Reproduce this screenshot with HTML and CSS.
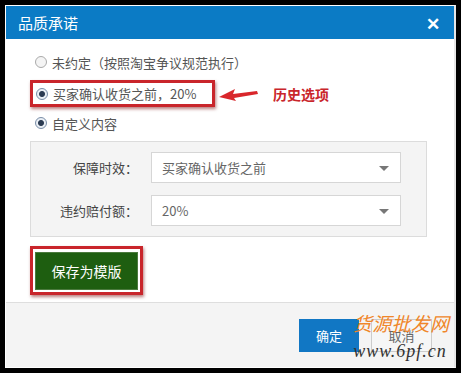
FILE: index.html
```html
<!DOCTYPE html>
<html>
<head>
	<meta charset="UTF-8">
	<title>品质承诺</title>
	<link rel="stylesheet" href="styles.css">
</head>
<body>
	<div class="dialog">
		<div class="dlg-head">
			<span class="dlg-title">品质承诺</span>
			<span class="dlg-close">&#x2715;</span>
		</div>
		<div class="dlg-body">
			<div class="opt opt-first">
				<span class="radio"></span>
				<span>未约定（按照淘宝争议规范执行）</span>
			</div>
			<div class="opt-line">
				<div class="mark">
					<div class="opt">
						<span class="radio on"></span>
						<span>买家确认收货之前，20%</span>
					</div>
				</div>
				<svg class="arrow" width="40" height="14" viewBox="0 0 40 14">
					<polygon points="0,9 16,1 14,6 38,3 39,6 15,10 17,13" fill="#d9262b"/>
				</svg>
				<span class="note">历史选项</span>
			</div>
			<div class="opt opt-last">
				<span class="radio on"></span>
				<span>自定义内容</span>
			</div>
			<div class="panel">
				<div class="row">
					<label>保障时效：</label>
					<div class="select">买家确认收货之前<i class="caret"></i></div>
				</div>
				<div class="row">
					<label>违约赔付额：</label>
					<div class="select">20%<i class="caret"></i></div>
				</div>
			</div>
			<div class="mark mark-btn">
				<div class="btn-save">保存为模版</div>
			</div>
		</div>
		<div class="dlg-foot">
			<div class="btn btn-ok">确定</div>
			<div class="btn btn-cancel">取消</div>
			<div class="stamp">
				<div class="stamp-cn">货 源 批 发 网</div>
				<div class="stamp-en">www.6pf.cn</div>
			</div>
		</div>
	</div>
</body>
</html>
```
FILE: styles.css
```css
body,div,span,label{
	margin: 0;
	padding: 0;
}
body{
	background: #000;
	padding: 5px 6px 4px 5px;
	font-family: "Noto Sans CJK SC", "Liberation Sans", sans-serif;
	font-size: 13px;
	color: #555;
}
.dialog{
	width: 448px;
	border: 1px solid #fff;
	border-right: 2px solid #e6e6e6;
	position: relative;
}
.dlg-head{
	height: 33px;
	background: #0b7bc5;
	display: flex;
	align-items: center;
	justify-content: space-between;
	padding: 0 14px 0 12px;
	color: #fff;
}
.dlg-title{
	font-size: 15px;
}
.dlg-close{
	font-size: 17px;
	font-weight: bold;
}
.dlg-body{
	background: #fff;
	height: 263px;
	padding-left: 24px;
	box-sizing: border-box;
	padding-top: 13px;
}
.opt{
	display: flex;
	align-items: center;
	height: 20px;
	gap: 5px;
	padding-left: 5px;
}
.radio{
	width: 10px;
	height: 10px;
	border-radius: 50%;
	border: 1px solid #aaa;
	background: #f4f4f4;
	display: block;
	box-sizing: content-box;
}
.radio.on{
	background: radial-gradient(circle, #2b3b52 0, #2b3b52 2.5px, #e9eef4 3.5px);
	border-color: #7a8ea8;
}
.opt-line{
	display: flex;
	align-items: center;
	margin-top: 8px;
}
.mark{
	border: 3px solid #c9252b;
	box-shadow: 1px 2px 3px rgba(120,0,0,.5);
	width: 185px;
	height: 27px;
	box-sizing: border-box;
	display: flex;
	align-items: center;
}
.mark .opt{
	padding-left: 3px;
}
.arrow{
	margin-left: 4px;
	margin-top: 2px;
}
.note{
	color: #c9252b;
	font-size: 14px;
	font-weight: bold;
	margin-left: 14px;
}
.opt-last{
	margin-top: 6px;
}
.panel{
	margin-top: 8px;
	width: 397px;
	height: 96px;
	box-sizing: border-box;
	background: #f4f4f4;
	border: 1px solid #dcdcdc;
	padding-top: 10px;
	display: flex;
	flex-direction: column;
	gap: 12px;
}
.row{
	display: flex;
	align-items: center;
}
.row label{
	width: 107px;
	text-align: right;
	color: #444;
}
.select{
	margin-left: 13px;
	width: 250px;
	height: 31px;
	box-sizing: border-box;
	background: #fff;
	border: 1px solid #d6d6d6;
	display: flex;
	align-items: center;
	padding-left: 10px;
	position: relative;
	color: #666;
}
.caret{
	position: absolute;
	right: 11px;
	top: 13px;
	width: 0;
	height: 0;
	border-left: 5px solid transparent;
	border-right: 5px solid transparent;
	border-top: 5px solid #777;
}
.mark-btn{
	margin-top: 9px;
	width: 113px;
	height: 49px;
	padding: 2px;
	justify-content: center;
}
.btn-save{
	width: 103px;
	height: 38px;
	background: #1e5e10;
	border: 1px solid #4b7a3e;
	box-sizing: border-box;
	color: #fff;
	font-size: 14px;
	display: flex;
	align-items: center;
	justify-content: center;
}
.dlg-foot{
	height: 65px;
	background: #f4f4f4;
	border-top: 1px solid #dedede;
	box-sizing: border-box;
	display: flex;
	align-items: center;
	justify-content: flex-end;
	padding-right: 22px;
	gap: 12px;
	position: relative;
}
.btn{
	height: 33px;
	box-sizing: border-box;
	display: flex;
	align-items: center;
	justify-content: center;
	font-size: 13px;
}
.btn-ok{
	width: 60px;
	background: #1177c4;
	color: #fff;
}
.btn-cancel{
	width: 61px;
	background: #f6f6f6;
	border: 1px solid #ccc;
	color: #666;
}
.stamp{
	position: absolute;
	right: 0;
	top: 10px;
	width: 108px;
	color: #f0862a;
	text-align: center;
	line-height: 1;
}
.stamp-cn{
	font-size: 19px;
	letter-spacing: -2px;
	font-family: "Noto Sans CJK SC", sans-serif;
	font-style: italic;
}
.stamp-en{
	font-size: 18px;
	letter-spacing: 1px;
	margin-top: 10px;
	color: #333;
	font-family: "Liberation Serif", serif;
	font-style: italic;
}
```
